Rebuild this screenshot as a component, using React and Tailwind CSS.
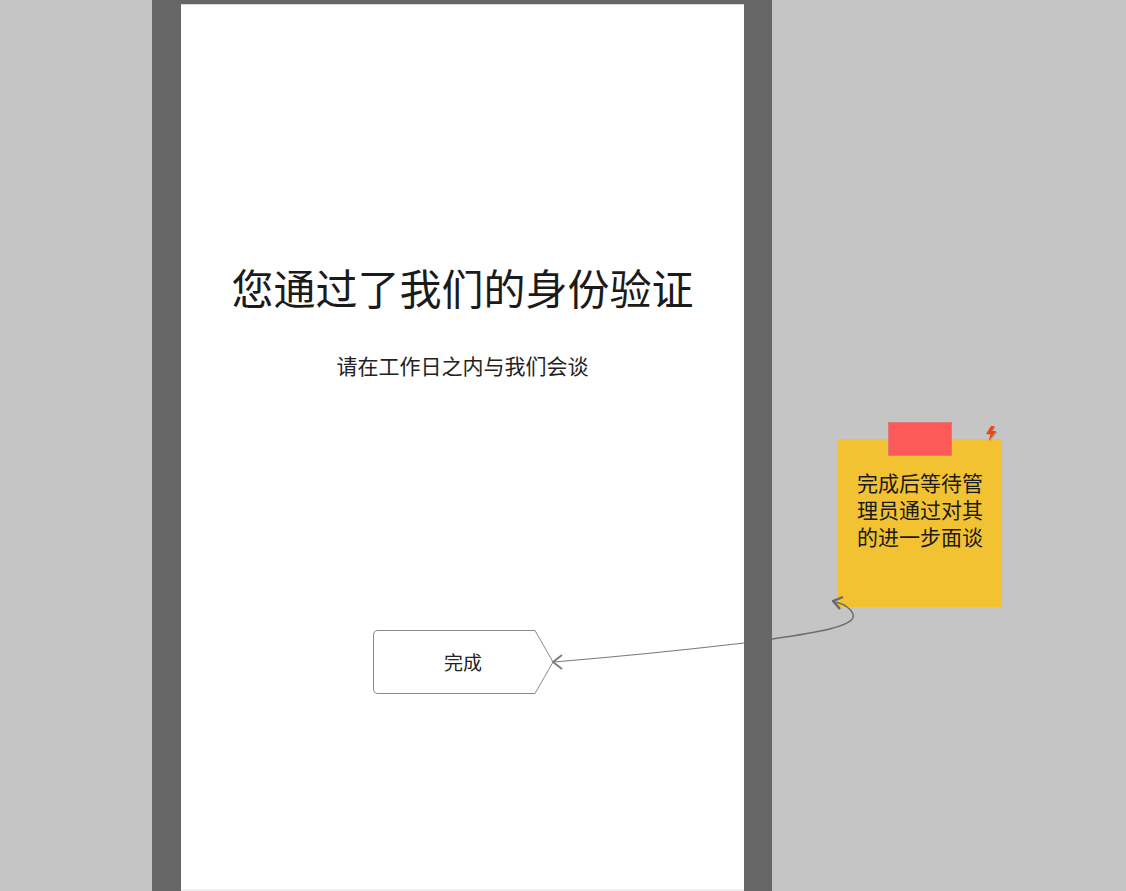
export default function App() {
  const cjk = { fontFamily: '"Noto Sans CJK SC", "Noto Sans", sans-serif' };

  return (
    <div className="relative w-[1126px] h-[891px] overflow-hidden bg-[#c5c5c5]" style={cjk}>
      {/* phone frame */}
      <div className="ml-[152px] w-[620px] h-full bg-[#666666] pt-[4px] pl-[29px] pr-[28px]">
        <div className="h-full bg-white border-t border-[#d9d9d9] border-b-2 border-b-[#f0f0f0] flex flex-col items-center">
          <h1 className="mt-[257px] text-[42px] leading-[50px] font-normal text-[#1b1b1b]">
            您通过了我们的身份验证
          </h1>
          <p className="mt-[41px] text-[21px] leading-[25px] text-[#222222]">
            请在工作日之内与我们会谈
          </p>

          {/* done button */}
          <div className="relative mt-[252px] ml-[2px] w-[181px] h-[64px]">
            <svg width="181" height="64" viewBox="0 0 181 64" className="absolute inset-0">
              <path
                d="M5 0.5 H162 L180 32 L162 63.5 H5 Q0.5 63.5 0.5 59 V5 Q0.5 0.5 5 0.5 Z"
                fill="#ffffff"
                stroke="#8a8a8a"
                strokeWidth="1"
              />
            </svg>
            <div className="relative h-full flex items-center justify-center text-[19px] text-[#222222] pr-[1px]">
              完成
            </div>
          </div>
        </div>
      </div>

      {/* sticky note */}
      <div className="absolute left-[838px] top-[439px] w-[164px] h-[168px] bg-[#f2c232] px-[17px] pt-[30px] text-center text-[21px] leading-[27px] text-[#1a1a1a]">
        完成后等待管理员通过对其的进一步面谈
      </div>
      <div className="absolute left-[888px] top-[422px] w-[64px] h-[34px] bg-[#fd5959] border border-[#b9a9a9]/40" />
      <svg className="absolute left-[983px] top-[424px]" width="18" height="20" viewBox="0 0 18 20">
        <path d="M9 3 L4 11 H8.5 L6.5 18 L14.5 8 H10 L12.5 3 Z" fill="#8e8778" opacity="0.55" />
        <path d="M8 2 L3 10 H7.5 L5.5 17 L13.5 7 H9 L11.5 2 Z" fill="#f2440e" />
      </svg>

      {/* connector lines */}
      <svg className="absolute inset-0 pointer-events-none" width="1126" height="891" viewBox="0 0 1126 891">
        <path d="M744 643 Q650 654 554 662" fill="none" stroke="#7a7a7a" strokeWidth="1.2" />
        <path d="M562 655 L553 662 L562 669" fill="none" stroke="#7a7a7a" strokeWidth="1.8" />
        <path
          d="M772 639 C815 633 858 626 853 614 C850 607 843 604 836 602"
          fill="none"
          stroke="#6e6e6e"
          strokeWidth="1.5"
        />
        <path d="M843 597 L833 601 L840 609" fill="none" stroke="#666666" strokeWidth="2.4" strokeLinejoin="round" />
      </svg>
    </div>
  );
}
